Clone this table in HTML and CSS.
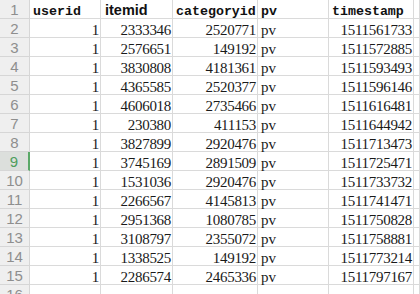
FILE: index.html
```html
<!DOCTYPE html>
<html>
<head>
<meta charset="utf-8">
<link rel="stylesheet" href="styles.css">
</head>
<body>
<div class="sheet">
  <div class="row">
    <div class="rh">1</div>
    <div class="c hd">userid</div>
    <div class="c hd sans">itemid</div>
    <div class="c hd">categoryid</div>
    <div class="c hd">pv</div>
    <div class="c hd">timestamp</div>
    <div class="c"></div>
  </div>
  <div class="row"><div class="rh">2</div><div class="c n">1</div><div class="c n">2333346</div><div class="c n">2520771</div><div class="c t">pv</div><div class="c n">1511561733</div><div class="c"></div></div>
  <div class="row"><div class="rh">3</div><div class="c n">1</div><div class="c n">2576651</div><div class="c n">149192</div><div class="c t">pv</div><div class="c n">1511572885</div><div class="c"></div></div>
  <div class="row"><div class="rh">4</div><div class="c n">1</div><div class="c n">3830808</div><div class="c n">4181361</div><div class="c t">pv</div><div class="c n">1511593493</div><div class="c"></div></div>
  <div class="row"><div class="rh">5</div><div class="c n">1</div><div class="c n">4365585</div><div class="c n">2520377</div><div class="c t">pv</div><div class="c n">1511596146</div><div class="c"></div></div>
  <div class="row"><div class="rh">6</div><div class="c n">1</div><div class="c n">4606018</div><div class="c n">2735466</div><div class="c t">pv</div><div class="c n">1511616481</div><div class="c"></div></div>
  <div class="row"><div class="rh">7</div><div class="c n">1</div><div class="c n">230380</div><div class="c n">411153</div><div class="c t">pv</div><div class="c n">1511644942</div><div class="c"></div></div>
  <div class="row"><div class="rh">8</div><div class="c n">1</div><div class="c n">3827899</div><div class="c n">2920476</div><div class="c t">pv</div><div class="c n">1511713473</div><div class="c"></div></div>
  <div class="row"><div class="rh sel">9</div><div class="c n">1</div><div class="c n">3745169</div><div class="c n">2891509</div><div class="c t">pv</div><div class="c n">1511725471</div><div class="c"></div></div>
  <div class="row"><div class="rh">10</div><div class="c n">1</div><div class="c n">1531036</div><div class="c n">2920476</div><div class="c t">pv</div><div class="c n">1511733732</div><div class="c"></div></div>
  <div class="row"><div class="rh">11</div><div class="c n">1</div><div class="c n">2266567</div><div class="c n">4145813</div><div class="c t">pv</div><div class="c n">1511741471</div><div class="c"></div></div>
  <div class="row"><div class="rh">12</div><div class="c n">1</div><div class="c n">2951368</div><div class="c n">1080785</div><div class="c t">pv</div><div class="c n">1511750828</div><div class="c"></div></div>
  <div class="row"><div class="rh">13</div><div class="c n">1</div><div class="c n">3108797</div><div class="c n">2355072</div><div class="c t">pv</div><div class="c n">1511758881</div><div class="c"></div></div>
  <div class="row"><div class="rh">14</div><div class="c n">1</div><div class="c n">1338525</div><div class="c n">149192</div><div class="c t">pv</div><div class="c n">1511773214</div><div class="c"></div></div>
  <div class="row"><div class="rh">15</div><div class="c n">1</div><div class="c n">2286574</div><div class="c n">2465336</div><div class="c t">pv</div><div class="c n">1511797167</div><div class="c"></div></div>
  <div class="row"><div class="rh">16</div><div class="c"></div><div class="c"></div><div class="c"></div><div class="c"></div><div class="c"></div><div class="c"></div></div>
</div>
</body>
</html>
```
FILE: styles.css
```css
html, body {
  margin: 0;
  padding: 0;
  background: #ffffff;
  overflow: hidden;
}
.sheet {
  width: 420px;
  height: 294px;
  overflow: hidden;
}
.row {
  display: grid;
  grid-template-columns: 30px 71px 72px 85px 71px 85px 6px;
  height: 19px;
}
.rh, .c {
  box-sizing: border-box;
  height: 19px;
  border-right: 1px solid #dadada;
  border-bottom: 1px solid #dadada;
  white-space: nowrap;
}
.rh {
  background: #efefef;
  border-color: #d6d6d6;
  color: #8e8e8e;
  font-family: "Liberation Sans", Arial, sans-serif;
  font-size: 15px;
  line-height: 15px;
  padding-top: 2px;
  text-align: center;
}
.rh.sel {
  background: #dcdfdc;
  color: #4f9e5c;
  border-right: 2px solid #5aa867;
}
.c {
  padding-top: 4px;
  line-height: 15px;
  overflow: visible;
  color: #1a1a1a;
}
.hd {
  font-family: "Liberation Mono", "Courier New", monospace;
  font-weight: bold;
  font-size: 13.3px;
  padding-left: 3px;
  color: #111;
}
.hd.sans {
  font-family: "Liberation Sans", Arial, sans-serif;
  font-size: 14.5px;
  padding-top: 2.5px;
  padding-left: 4px;
}
.n {
  font-family: "Liberation Serif", "Times New Roman", serif;
  font-size: 15px;
  letter-spacing: -0.3px;
  text-align: right;
  padding-right: 1px;
}
.t {
  font-family: "Liberation Serif", "Times New Roman", serif;
  font-size: 15px;
  padding-left: 3px;
}
```
